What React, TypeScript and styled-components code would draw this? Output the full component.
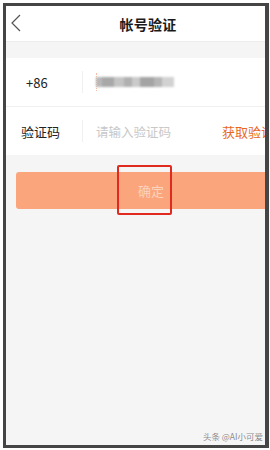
import React from "react"
import styled, { createGlobalStyle } from "styled-components"

const GlobalStyle = createGlobalStyle`
	html, body {
		margin: 0;
		padding: 0;
		background: #ffffff;
	}
	body {
		font-family: "Noto Sans CJK SC", "Noto Sans", "Liberation Sans", sans-serif;
	}
`

const Outer = styled.div`
	width: 270px;
	height: 450px;
	box-sizing: border-box;
	padding: 3px 1px 2px 3px;
	background: #ffffff;
`

const Frame = styled.div`
	height: 100%;
	box-sizing: border-box;
	border-style: solid;
	border-color: #454545;
	border-width: 3px 4px 3px 3px;
	background: #f5f5f6;
	overflow: hidden;
	position: relative;
`

const Page = styled.div`
	width: 284px;
	display: flex;
	flex-direction: column;
`

const Header = styled.div`
	height: 35px;
	background: #ffffff;
	border-bottom: 1px solid #ececec;
	display: flex;
	align-items: center;
	justify-content: center;
	position: relative;
`

const Back = styled.svg`
	position: absolute;
	left: 4px;
	top: 8px;
`

const Title = styled.div`
	font-size: 14px;
	font-weight: 700;
	color: #1a1a1a;
	letter-spacing: 0.3px;
`

const Form = styled.div`
	margin-top: 16px;
	background: #ffffff;
	display: flex;
	flex-direction: column;
`

const Row = styled.div<{ $line?: boolean }>`
	height: 48px;
	display: flex;
	align-items: center;
	border-bottom: ${(p) => (p.$line ? "1px solid #f0f0f0" : "none")};
`

const Label = styled.div<{ $pad: number }>`
	width: 76px;
	box-sizing: border-box;
	padding-left: ${(p) => p.$pad}px;
	font-size: 13px;
	color: #222222;
`

const Divider = styled.div`
	width: 1px;
	height: 22px;
	background: #f0f0f0;
`

const Field = styled.div`
	flex: 0 0 139px;
	box-sizing: border-box;
	padding-left: 13px;
	display: flex;
	align-items: center;
	position: relative;
`

const Placeholder = styled.div`
	font-size: 12.5px;
	color: #c8c8c8;
`

const Blur = styled.div`
	display: flex;
	height: 10px;
	filter: blur(0.8px);
`

const BlurCell = styled.div<{ $c: string; $w: number }>`
	width: ${(p) => p.$w}px;
	height: 10px;
	background: ${(p) => p.$c};
`

const Caret = styled.div`
	position: absolute;
	left: 13px;
	top: 50%;
	width: 1px;
	height: 18px;
	margin-top: -9px;
	border-left: 1px dotted #f2a27c;
	opacity: 0.7;
`

const GetCode = styled.div`
	font-size: 13px;
	color: #e8691e;
	white-space: nowrap;
`

const ButtonWrap = styled.div`
	padding: 17px 4px 0 10px;
`

const Confirm = styled.div`
	height: 37px;
	border-radius: 3px;
	background: #faa57c;
	display: flex;
	align-items: center;
	justify-content: center;
	font-size: 13px;
	color: #fcd3bd;
	position: relative;
`

const Mark = styled.div`
	position: absolute;
	left: 101px;
	top: -7px;
	width: 55px;
	height: 50px;
	box-sizing: border-box;
	border: 2px solid #e02a20;
	border-radius: 2px;
`

const Watermark = styled.div`
	position: absolute;
	right: 2px;
	bottom: 3px;
	font-size: 8.5px;
	color: #8a8a8a;
	text-shadow: 0 0 1px #ffffff;
`

const blurCells = [
	{ c: "#b8b8b8", w: 6 },
	{ c: "#a8a8a8", w: 12 },
	{ c: "#c4c4c4", w: 10 },
	{ c: "#b0b0b0", w: 8 },
	{ c: "#cacaca", w: 8 },
	{ c: "#a4a4a4", w: 14 },
	{ c: "#b6b6b6", w: 8 },
	{ c: "#d2d2d2", w: 12 },
]

const App: React.FC = () => {
	return (
		<>
			<GlobalStyle />
			<Outer>
				<Frame>
					<Page>
						<Header>
							<Back width="12" height="18" viewBox="0 0 12 18">
								<path
									d="M10 1 L2 9 L10 17"
									fill="none"
									stroke="#555555"
									strokeWidth="1.2"
								/>
							</Back>
							<Title>帐号验证</Title>
						</Header>
						<Form>
							<Row $line>
								<Label $pad={20}>+86</Label>
								<Divider />
								<Field>
									<Caret />
									<Blur>
										{blurCells.map((b, i) => (
											<BlurCell key={"b" + i} $c={b.c} $w={b.w} />
										))}
									</Blur>
								</Field>
							</Row>
							<Row>
								<Label $pad={15}>验证码</Label>
								<Divider />
								<Field>
									<Placeholder>请输入验证码</Placeholder>
								</Field>
								<GetCode>获取验证码</GetCode>
							</Row>
						</Form>
						<ButtonWrap>
							<Confirm>
								确定
								<Mark />
							</Confirm>
						</ButtonWrap>
					</Page>
					<Watermark>头条 @AI小可爱</Watermark>
				</Frame>
			</Outer>
		</>
	)
}

export default App
